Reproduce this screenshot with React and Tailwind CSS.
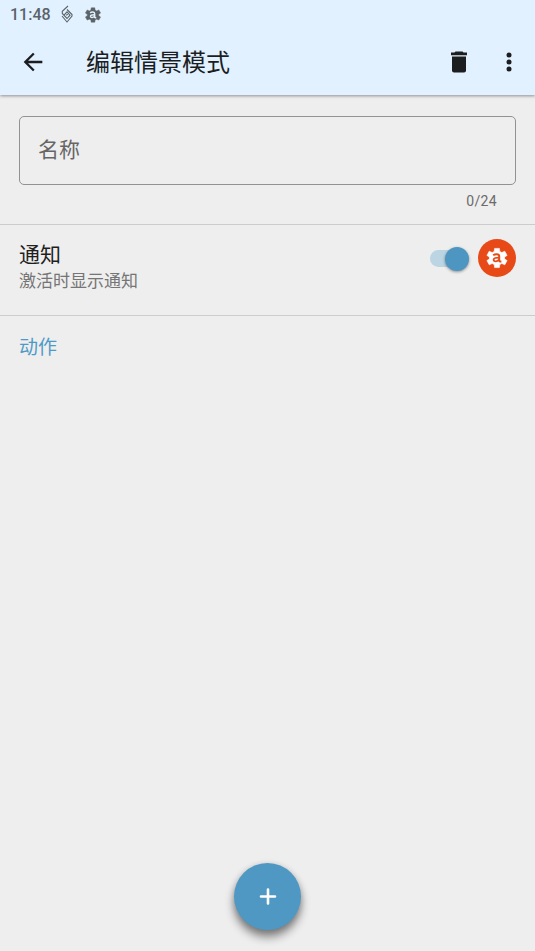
import { useState } from "react";

const GEAR =
  "M9.600 2.400h4.800l.4 3 2 1.100 3-1.300 2.300 4.200-2.500 1.600v2l2.500 1.600-2.300 4.200-3-1.300-2 1.100-.4 3H9.600l-.4-3-2-1.100-3 1.300-2.300-4.200 2.500-1.600v-2L1.900 9.400l2.300-4.200 3 1.300 2-1.100z";

function GearLogo({ className, letterClass }) {
  return (
    <svg viewBox="0 0 24 24" className={className} aria-hidden="true">
      <path d={GEAR} fill="currentColor" stroke="currentColor" strokeWidth="0.600" strokeLinejoin="round" />
      <g className={letterClass} fill="none" stroke="currentColor">
        <path d="M8.200 9.200C10 7.800 14.200 7.500 14.200 10.200v4c0 1.100.6 1.500 2.200 1.300" strokeWidth="2" />
        <path d="M14 11.700c-3 0-5.400.2-5.400 2.100 0 2.300 4.400 1.900 5.400-.5" strokeWidth="1.800" />
      </g>
    </svg>
  );
}

function StatusBar() {
  return (
    <div className="flex h-7 items-center px-2.5 pt-0.5 text-[#5b6368]">
      <span className="w-[50px] text-base leading-5 font-medium">11:48</span>
      <svg viewBox="0 0 14 20" className="h-5 w-3.5" fill="none" stroke="currentColor" strokeWidth="1.100" aria-hidden="true">
        <path d="M8 1 2.300 6.300v2.200L7 13.500l3-3.300-3-3.400-2.700 3" />
        <path d="M7 4.500 12 9.500v1.500l-5 6-5-6" />
        <path d="m6.200 10.200 1.600-1" />
      </svg>
      <GearLogo className="ml-2.5 size-[18px]" letterClass="text-[#e1f1ff]" />
    </div>
  );
}

function AppBar() {
  return (
    <div className="flex h-[67px] items-center pr-2 pl-[13px] text-[#1b1d1f]">
      <button type="button" aria-label="返回" className="flex size-10 items-center justify-center">
        <svg viewBox="0 0 24 24" className="size-7" fill="currentColor" aria-hidden="true">
          <path d="M20 11H7.830l5.590-5.590L12 4l-8 8 8 8 1.410-1.410L7.830 13H20z" />
        </svg>
      </button>
      <h1 className="ml-[33px] flex-1 pt-0.5 text-2xl leading-8 font-normal">编辑情景模式</h1>
      <button type="button" aria-label="删除" className="flex size-10 items-center justify-center">
        <svg viewBox="0 0 28 28" className="size-7" fill="currentColor" aria-hidden="true">
          <path d="M10.500 3.500h7l1 1H22v2.800H6V4.500h3.500z" />
          <path d="M7 8.500h14V22.500a2 2 0 0 1-2 2H9a2 2 0 0 1-2-2z" />
        </svg>
      </button>
      <button type="button" aria-label="更多选项" className="ml-3 flex size-9 items-center justify-center">
        <svg viewBox="0 0 28 28" className="size-7" fill="currentColor" aria-hidden="true">
          <circle cx="14" cy="7" r="2.500" />
          <circle cx="14" cy="14" r="2.500" />
          <circle cx="14" cy="21" r="2.500" />
        </svg>
      </button>
    </div>
  );
}

export default function App() {
  const [name, setName] = useState("");
  const [notify, setNotify] = useState(true);

  return (
    <div className="flex min-h-screen flex-col bg-[#eeeeee] font-[Roboto,'Noto_Sans_CJK_SC',sans-serif]">
      <header className="bg-[#e1f1ff] shadow-[0_1px_3px_rgba(0,0,0,0.4)]">
        <StatusBar />
        <AppBar />
      </header>

      <main className="flex flex-1 flex-col">
        <section className="border-b border-[#cccccc] px-[19px] pt-[21px] pb-[13px]">
          <input
            id="profile-name"
            type="text"
            maxLength={24}
            aria-label="名称"
            placeholder="名称"
            value={name}
            onChange={(e) => setName(e.target.value)}
            className="block h-[69px] w-full rounded-[5px] border border-[#929292] bg-transparent px-[18px] pb-0.5 text-[21px] text-[#212121] outline-none placeholder:text-[#666666]"
          />
          <p className="mt-1.5 pr-[19px] text-right text-sm leading-5 tracking-wide text-[#6b6b6b]">
            {name.length}/24
          </p>
        </section>

        <section className="flex h-[91px] items-start border-b border-[#cccccc] px-[19px] pt-3.5">
          <label htmlFor="notify" className="flex-1 pt-0.5">
            <span className="block text-[21px] leading-7 text-[#1f1f1f]">通知</span>
            <span className="block text-[17px] leading-6 text-[#757575]">激活时显示通知</span>
          </label>
          <input
            id="notify"
            type="checkbox"
            role="switch"
            checked={notify}
            onChange={(e) => setNotify(e.target.checked)}
            className="mt-[11px] flex h-[17px] w-[39px] appearance-none items-center rounded-full bg-[#bdbdbd] before:size-6 before:shrink-0 before:rounded-full before:bg-[#fafafa] before:shadow-[0_1px_3px_rgba(0,0,0,0.4)] checked:justify-end checked:bg-[#bbd5e3] checked:before:bg-[#4d96c1]"
          />
          <span className="ml-[9px] flex size-[38px] items-center justify-center rounded-full bg-[#e84a17] text-white">
            <GearLogo className="size-6" letterClass="text-[#e84a17]" />
          </span>
        </section>

        <h2 className="px-[19px] pt-[18px] text-[19px] leading-7 font-normal text-[#4d9ac8]">动作</h2>

        <button
          type="button"
          aria-label="添加动作"
          className="mx-auto mt-auto mb-[21px] flex size-[67px] items-center justify-center rounded-full bg-[#4f98c3] text-white shadow-[0_7px_10px_rgba(0,0,0,0.45),0_1px_6px_rgba(0,0,0,0.15)]"
        >
          <svg viewBox="0 0 28 28" className="size-7" fill="none" stroke="currentColor" strokeWidth="2.600" strokeLinecap="round" aria-hidden="true">
            <path d="M14 6.500v14M7 13.500h14" />
          </svg>
        </button>
      </main>
    </div>
  );
}
